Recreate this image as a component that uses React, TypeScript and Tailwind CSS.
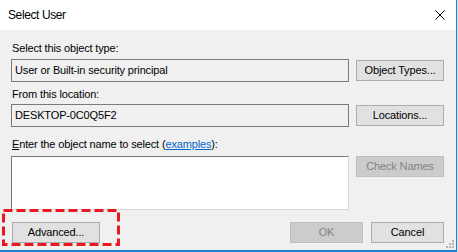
import React from "react";

const font = { fontFamily: '"Liberation Sans", Arial, sans-serif' };

function Boton({
  children,
  width,
  disabled = false,
}: {
  children: React.ReactNode;
  width: string;
  disabled?: boolean;
}) {
  return (
    <div
      className={`flex h-[21px] shrink-0 items-center justify-center border text-[11px] leading-[15px] tracking-[-0.15px] ${width} ${
        disabled
          ? "border-[#bfbfbf] bg-[#cccccc] text-[#838383]"
          : "border-[#adadad] bg-[#e1e1e1] text-black"
      }`}
    >
      {children}
    </div>
  );
}

function CampoTexto({ children }: { children: React.ReactNode }) {
  return (
    <div className="flex h-[23px] w-[338px] shrink-0 items-center border border-[#7a7a7a] bg-[#f0f0f0] pl-[3px] text-[11px] leading-[15px] tracking-[-0.15px] text-black">
      {children}
    </div>
  );
}

export default function App() {
  return (
    <div className="h-[252px] w-[458px] overflow-hidden bg-[#d6e6f4]" style={font}>
      <div className="relative flex h-[252px] w-[457px] flex-col border-r border-b-2 border-[#1a82d6] bg-[#f0f0f0]">
        {/* barra de titulo */}
        <div className="flex h-[30px] shrink-0 items-center justify-between bg-white pl-2 pr-[10px]">
          <span className="text-[12px] leading-[15px] tracking-[-0.4px] text-black">Select User</span>
          <svg width="10" height="10" viewBox="0 0 10 10" className="mr-[1px]">
            <path d="M0.5 0.5L9.5 9.5M9.5 0.5L0.5 9.5" stroke="#000" strokeWidth="1" />
          </svg>
        </div>

        <div className="flex flex-col pl-[11px] text-[11px] leading-[15px] tracking-[-0.15px] text-black">
          <div className="mt-[11px] pl-px">Select this object type:</div>
          <div className="mt-[3px] flex items-start gap-[7px]">
            <CampoTexto>User or Built-in security principal</CampoTexto>
            <div className="mt-px">
              <Boton width="w-[88px]">Object Types...</Boton>
            </div>
          </div>

          <div className="mt-[5px] pl-px">From this location:</div>
          <div className="mt-[2px] flex items-start gap-[7px]">
            <CampoTexto>DESKTOP-0C0Q5F2</CampoTexto>
            <div className="mt-px">
              <Boton width="w-[88px]">Locations...</Boton>
            </div>
          </div>

          <div className="mt-[10px] pl-px">
            <span className="underline">E</span>nter the object name to select (
            <span className="text-[#0066cc] underline">examples</span>):
          </div>
          <div className="mt-[4px] flex items-start gap-[8px]">
            <div className="h-[54px] w-[338px] shrink-0 border border-t-[#7a7a7a] border-l-[#7a7a7a] border-r-[#d9d9d9] border-b-[#d9d9d9] bg-white" />
            <div className="-ml-px">
              <Boton width="w-[88px]" disabled>
                Check Names
              </Boton>
            </div>
          </div>

          <div className="mt-[12px] flex items-start pr-[12px]">
            <div className="ml-px">
              <Boton width="w-[88px]">Advanced...</Boton>
            </div>
            <div className="ml-auto flex gap-[8px]">
              <Boton width="w-[73px]" disabled>
                OK
              </Boton>
              <Boton width="w-[73px]">Cancel</Boton>
            </div>
          </div>
        </div>

        {/* marco rojo de resaltado */}
        <svg className="absolute left-[2px] top-[209px]" width="118" height="37" viewBox="0 0 118 37">
          <rect
            x="1.5"
            y="1.5"
            width="115"
            height="34"
            fill="none"
            stroke="#ea1921"
            strokeWidth="3"
            strokeDasharray="9 4"
          />
        </svg>

        {/* agarre de redimension */}
        <svg className="absolute bottom-[1px] right-[1px]" width="10" height="10" viewBox="0 0 10 10">
          <g fill="#b4b4b4">
            <rect x="7" y="1" width="2" height="2" />
            <rect x="4" y="4" width="2" height="2" />
            <rect x="7" y="4" width="2" height="2" />
            <rect x="1" y="7" width="2" height="2" />
            <rect x="4" y="7" width="2" height="2" />
            <rect x="7" y="7" width="2" height="2" />
          </g>
        </svg>
      </div>
    </div>
  );
}
